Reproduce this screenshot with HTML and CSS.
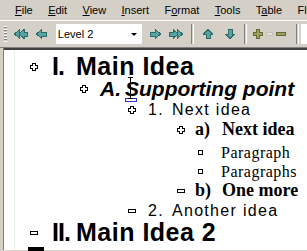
FILE: index.html
```html
<!DOCTYPE html>
<html lang="en">
  <head>
    <meta charset="UTF-8" />
    <title>Outline view</title>
    <link rel="stylesheet" href="styles.css">
  </head>
  <body>
    <div class="menubar">
      <span class="grip"></span>
      <span class="menu"><u>F</u>ile</span>
      <span class="menu"><u>E</u>dit</span>
      <span class="menu"><u>V</u>iew</span>
      <span class="menu"><u>I</u>nsert</span>
      <span class="menu">F<u>o</u>rmat</span>
      <span class="menu"><u>T</u>ools</span>
      <span class="menu">T<u>a</u>ble</span>
      <span class="menu">Fl</span>
    </div>
    <div class="toolbar">
      <span class="grip"></span>
      <span class="btn w24">
        <svg width="14" height="10" viewBox="0 0 14 10"><polygon class="teal" points="0.5,5 5.5,0.5 5.5,9.5"/><polygon class="teal" points="5,5 10,0.5 10,3 13.5,3 13.5,7 10,7 10,9.5"/></svg>
      </span>
      <span class="btn w18">
        <svg width="11" height="10" viewBox="0 0 11 10"><polygon class="teal" points="0.5,5 5.5,0.5 5.5,3 10.5,3 10.5,7 5.5,7 5.5,9.5"/></svg>
      </span>
      <span class="combo">
        <span class="combo-text">Level 2</span>
        <span class="combo-arrow"></span>
      </span>
      <span class="btn w18 ml4">
        <svg width="11" height="10" viewBox="0 0 11 10"><polygon class="teal" points="10.5,5 5.5,0.5 5.5,3 0.5,3 0.5,7 5.5,7 5.5,9.5"/></svg>
      </span>
      <span class="btn w24">
        <svg width="14" height="10" viewBox="0 0 14 10"><polygon class="teal" points="0.5,3 4,3 4,0.5 9,5 4,9.5 4,7 0.5,7"/><polygon class="teal" points="13.5,5 8.5,0.5 8.5,9.5"/></svg>
      </span>
      <span class="sep"></span>
      <span class="btn w22">
        <svg width="10" height="10" viewBox="0 0 10 10"><polygon class="teal" points="5,0.5 9.5,5 7,5 7,9.5 3,9.5 3,5 0.5,5"/></svg>
      </span>
      <span class="btn w22">
        <svg width="10" height="10" viewBox="0 0 10 10"><polygon class="teal" points="5,9.5 9.5,5 7,5 7,0.5 3,0.5 3,5 0.5,5"/></svg>
      </span>
      <span class="sep"></span>
      <span class="btn w16">
        <svg width="10" height="10" viewBox="0 0 10 10"><polygon class="olive" points="3.5,0.5 6.5,0.5 6.5,3.5 9.5,3.5 9.5,6.5 6.5,6.5 6.5,9.5 3.5,9.5 3.5,6.5 0.5,6.5 0.5,3.5 3.5,3.5"/></svg>
      </span>
      <span class="btn w8">
        <svg width="8" height="10" viewBox="0 0 8 10"><rect class="faint" x="0.5" y="3.5" width="6" height="3"/></svg>
      </span>
      <span class="btn w14">
        <svg width="10" height="10" viewBox="0 0 10 10"><rect class="olive" x="0.5" y="3.5" width="9" height="3"/></svg>
      </span>
      <span class="sep wide"></span>
      <span class="stub"></span>
    </div>
    <div class="doc">
      <div class="edge"></div>
      <div class="content">
        <div class="row l1">
          <span class="tog"><svg width="8" height="8" viewBox="0 0 8 8"><polygon class="box" points="2.5,0.5 5.5,0.5 5.5,2.5 7.5,2.5 7.5,5.5 5.5,5.5 5.5,7.5 2.5,7.5 2.5,5.5 0.5,5.5 0.5,2.5 2.5,2.5"/></svg></span>
          <span class="num">I.</span><span class="txt">Main Idea</span>
        </div>
        <div class="row l2">
          <span class="tog"><svg width="8" height="8" viewBox="0 0 8 8"><polygon class="box" points="2.5,0.5 5.5,0.5 5.5,2.5 7.5,2.5 7.5,5.5 5.5,5.5 5.5,7.5 2.5,7.5 2.5,5.5 0.5,5.5 0.5,2.5 2.5,2.5"/></svg></span>
          <span class="num">A.</span><span class="txt"><span class="smart">S</span>upporting point<span class="ibeam"></span></span>
        </div>
        <div class="row l3">
          <span class="tog"><svg width="8" height="8" viewBox="0 0 8 8"><polygon class="box" points="2.5,0.5 5.5,0.5 5.5,2.5 7.5,2.5 7.5,5.5 5.5,5.5 5.5,7.5 2.5,7.5 2.5,5.5 0.5,5.5 0.5,2.5 2.5,2.5"/></svg></span>
          <span class="num">1.</span><span class="txt">Next idea</span>
        </div>
        <div class="row l4">
          <span class="tog"><svg width="8" height="8" viewBox="0 0 8 8"><polygon class="box" points="2.5,0.5 5.5,0.5 5.5,2.5 7.5,2.5 7.5,5.5 5.5,5.5 5.5,7.5 2.5,7.5 2.5,5.5 0.5,5.5 0.5,2.5 2.5,2.5"/></svg></span>
          <span class="num">a)</span><span class="txt">Next idea</span>
        </div>
        <div class="row body">
          <span class="tog"><svg width="5" height="5" viewBox="0 0 5 5"><rect class="box" x="0.5" y="0.5" width="4" height="4"/></svg></span>
          <span class="txt">Paragraph</span>
        </div>
        <div class="row body">
          <span class="tog"><svg width="5" height="5" viewBox="0 0 5 5"><rect class="box" x="0.5" y="0.5" width="4" height="4"/></svg></span>
          <span class="txt">Paragraphs</span>
        </div>
        <div class="row l4">
          <span class="tog"><svg width="8" height="4" viewBox="0 0 8 4"><rect class="box" x="0.5" y="0.5" width="7" height="3"/></svg></span>
          <span class="num">b)</span><span class="txt">One more</span>
        </div>
        <div class="row l3">
          <span class="tog"><svg width="8" height="4" viewBox="0 0 8 4"><rect class="box" x="0.5" y="0.5" width="7" height="3"/></svg></span>
          <span class="num">2.</span><span class="txt">Another idea</span>
        </div>
        <div class="row l1">
          <span class="tog"><svg width="8" height="4" viewBox="0 0 8 4"><rect class="box" x="0.5" y="0.5" width="7" height="3"/></svg></span>
          <span class="num">II.</span><span class="txt">Main Idea 2</span>
        </div>
        <div class="row next">
          <span class="bar"></span>
        </div>
      </div>
    </div>
  </body>
</html>
```

FILE: styles.css
```css
html,
body {
  margin: 0;
  width: 307px;
  height: 251px;
  overflow: hidden;
  background: #d4d0c8;
}
.menubar {
  display: flex;
  align-items: center;
  height: 20px;
  font-family: "Liberation Sans", Arial, sans-serif;
  font-size: 11px;
  color: #000;
}
.menu {
  margin-right: 15.4px;
  white-space: nowrap;
}
.grip {
  width: 3px;
  height: 14px;
  margin: 0 11px 0 4px;
  background: repeating-linear-gradient(#fff 0 1px, #808080 1px 2px, #d4d0c8 2px 3px);
}
.toolbar {
  display: flex;
  align-items: center;
  height: 27px;
  border-top: 1px solid #fff;
  box-sizing: border-box;
}
.toolbar .grip {
  margin: 0 2px 0 4px;
  height: 16px;
}
.btn {
  display: flex;
  justify-content: center;
  align-items: center;
  height: 22px;
}
.btn svg {
  display: block;
  shape-rendering: crispEdges;
}
.w24 { width: 24px; }
.w22 { width: 22px; }
.w18 { width: 18px; }
.w16 { width: 16px; }
.w14 { width: 14px; }
.w8 { width: 8px; justify-content: flex-start; }
.ml4 { margin-left: 4px; }
.teal {
  fill: #5aa3a3;
  stroke: #2e6c6c;
  stroke-width: 1;
}
.olive {
  fill: #9ba05c;
  stroke: #666a34;
  stroke-width: 1;
}
.faint {
  fill: #e4e2dc;
  stroke: #c4c0b8;
  stroke-width: 1;
}
.combo {
  display: flex;
  align-items: center;
  width: 87px;
  height: 20px;
  margin-left: 5px;
  background: #fff;
  font-family: "Liberation Sans", Arial, sans-serif;
  font-size: 11px;
}
.combo-text {
  flex: 1;
  padding-left: 2px;
}
.combo-arrow {
  width: 0;
  height: 0;
  margin-right: 5px;
  border-left: 3px solid transparent;
  border-right: 3px solid transparent;
  border-top: 3px solid #000;
}
.sep {
  width: 1px;
  height: 20px;
  margin: 0 3px;
  border-left: 1px solid #808080;
  border-right: 1px solid #fff;
}
.sep.wide {
  margin: 0 2px 0 8px;
}
.stub {
  width: 6px;
  height: 20px;
  background: #fff;
}
.doc {
  display: flex;
  height: 202px;
  border-top: 1px solid #808080;
}
.edge {
  width: 4px;
  background: linear-gradient(to right, #d4d0c8 0 3px, #808080 3px 4px);
}
.content {
  flex: 1;
  padding-top: 5px;
  border-top: 2px solid #404040;
  background: linear-gradient(to right, #fff 0 10px, #eeeeee 10px 11px, #fff 11px);
  color: #000;
}
.row {
  display: flex;
  align-items: center;
  white-space: nowrap;
}
.tog {
  display: flex;
  align-items: center;
}
.tog svg {
  display: block;
  shape-rendering: crispEdges;
}
.box {
  fill: #fff;
  stroke: #000;
  stroke-width: 1;
}
.l1 {
  height: 23px;
  padding-left: 26px;
  font: bold 25px/23px "Liberation Sans", Arial, sans-serif;
  letter-spacing: 0.5px;
}
.l1 .tog { width: 22px; }
.l1 .num {
  width: 24px;
  letter-spacing: -1px;
}
.l2 {
  height: 21px;
  padding-left: 76px;
  font: italic bold 21px/21px "Liberation Sans", Arial, sans-serif;
}
.l2 .tog { width: 20px; }
.l2 .num { width: 25px; }
.l3 {
  height: 21px;
  padding-left: 124px;
  font: 16px/21px "Liberation Sans", Arial, sans-serif;
  letter-spacing: 1.3px;
}
.l3 .tog { width: 20px; }
.l3 .num { width: 24px; }
.l4 {
  height: 19px;
  padding-left: 173px;
  font: bold 18px/19px "Liberation Serif", "Times New Roman", serif;
}
.l4 .tog { width: 18px; }
.l4 .num { width: 27px; }
.body {
  height: 19px;
  padding-left: 194px;
  font: 16px/19px "Liberation Serif", "Times New Roman", serif;
  letter-spacing: 0.5px;
}
.l4 + .body {
  margin-top: 4px;
}
.body .tog { width: 23px; }
.txt {
  position: relative;
}
.smart {
  position: relative;
}
.smart::after {
  content: "";
  position: absolute;
  left: 0;
  bottom: -2px;
  width: 10px;
  height: 2px;
  border: 1px solid #3333cc;
  background: #fff;
}
.ibeam {
  position: absolute;
  left: 3px;
  top: -1px;
  width: 5px;
  height: 22px;
  border-top: 1px solid #000;
  border-bottom: 1px solid #000;
  box-sizing: border-box;
  background: linear-gradient(to right, transparent 0 2px, #000 2px 3px, transparent 3px);
}
.next {
  height: 6px;
  padding-left: 24px;
  align-items: flex-start;
}
.bar {
  width: 16px;
  height: 4px;
  margin-top: 3px;
  background: #000;
}
```
